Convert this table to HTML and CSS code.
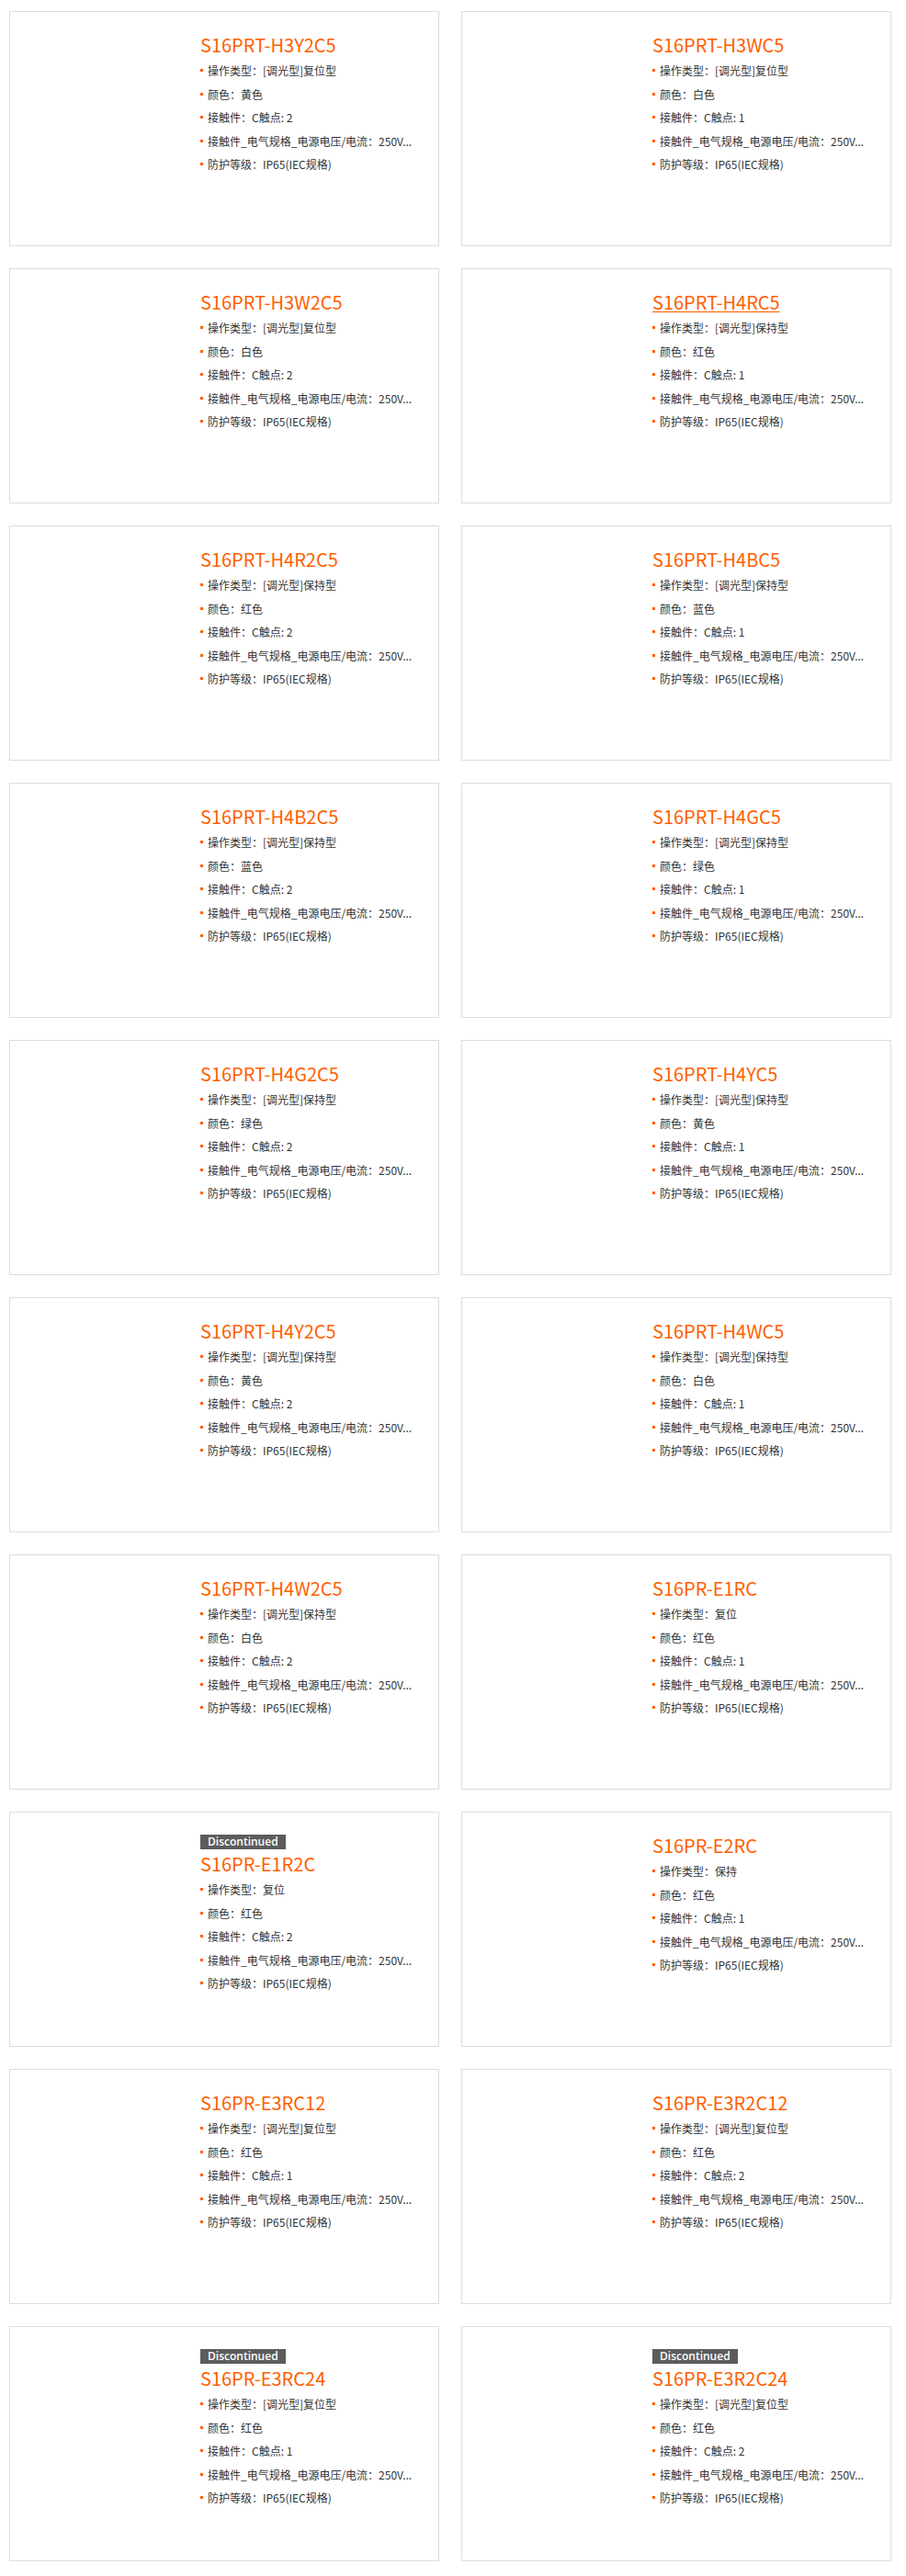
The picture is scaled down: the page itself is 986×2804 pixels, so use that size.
FILE: index.html
```html
<!DOCTYPE html>
<html lang="zh-CN">
<head>
<meta charset="utf-8">
<title>S16PR 产品列表</title>
<link rel="stylesheet" href="styles.css">
</head>
<body>
<div class="grid">

  <div class="card"><div class="thumb"></div><div class="info">
    <a class="title" href="#">S16PRT-H3Y2C5</a>
    <ul class="specs"><li>操作类型：[调光型]复位型</li><li>颜色：黄色</li><li>接触件：C触点: 2</li><li>接触件_电气规格_电源电压/电流：250V...</li><li>防护等级：IP65(IEC规格)</li></ul>
  </div></div>

  <div class="card"><div class="thumb"></div><div class="info">
    <a class="title" href="#">S16PRT-H3WC5</a>
    <ul class="specs"><li>操作类型：[调光型]复位型</li><li>颜色：白色</li><li>接触件：C触点: 1</li><li>接触件_电气规格_电源电压/电流：250V...</li><li>防护等级：IP65(IEC规格)</li></ul>
  </div></div>

  <div class="card"><div class="thumb"></div><div class="info">
    <a class="title" href="#">S16PRT-H3W2C5</a>
    <ul class="specs"><li>操作类型：[调光型]复位型</li><li>颜色：白色</li><li>接触件：C触点: 2</li><li>接触件_电气规格_电源电压/电流：250V...</li><li>防护等级：IP65(IEC规格)</li></ul>
  </div></div>

  <div class="card"><div class="thumb"></div><div class="info">
    <a class="title hover" href="#">S16PRT-H4RC5</a>
    <ul class="specs"><li>操作类型：[调光型]保持型</li><li>颜色：红色</li><li>接触件：C触点: 1</li><li>接触件_电气规格_电源电压/电流：250V...</li><li>防护等级：IP65(IEC规格)</li></ul>
  </div></div>

  <div class="card"><div class="thumb"></div><div class="info">
    <a class="title" href="#">S16PRT-H4R2C5</a>
    <ul class="specs"><li>操作类型：[调光型]保持型</li><li>颜色：红色</li><li>接触件：C触点: 2</li><li>接触件_电气规格_电源电压/电流：250V...</li><li>防护等级：IP65(IEC规格)</li></ul>
  </div></div>

  <div class="card"><div class="thumb"></div><div class="info">
    <a class="title" href="#">S16PRT-H4BC5</a>
    <ul class="specs"><li>操作类型：[调光型]保持型</li><li>颜色：蓝色</li><li>接触件：C触点: 1</li><li>接触件_电气规格_电源电压/电流：250V...</li><li>防护等级：IP65(IEC规格)</li></ul>
  </div></div>

  <div class="card"><div class="thumb"></div><div class="info">
    <a class="title" href="#">S16PRT-H4B2C5</a>
    <ul class="specs"><li>操作类型：[调光型]保持型</li><li>颜色：蓝色</li><li>接触件：C触点: 2</li><li>接触件_电气规格_电源电压/电流：250V...</li><li>防护等级：IP65(IEC规格)</li></ul>
  </div></div>

  <div class="card"><div class="thumb"></div><div class="info">
    <a class="title" href="#">S16PRT-H4GC5</a>
    <ul class="specs"><li>操作类型：[调光型]保持型</li><li>颜色：绿色</li><li>接触件：C触点: 1</li><li>接触件_电气规格_电源电压/电流：250V...</li><li>防护等级：IP65(IEC规格)</li></ul>
  </div></div>

  <div class="card"><div class="thumb"></div><div class="info">
    <a class="title" href="#">S16PRT-H4G2C5</a>
    <ul class="specs"><li>操作类型：[调光型]保持型</li><li>颜色：绿色</li><li>接触件：C触点: 2</li><li>接触件_电气规格_电源电压/电流：250V...</li><li>防护等级：IP65(IEC规格)</li></ul>
  </div></div>

  <div class="card"><div class="thumb"></div><div class="info">
    <a class="title" href="#">S16PRT-H4YC5</a>
    <ul class="specs"><li>操作类型：[调光型]保持型</li><li>颜色：黄色</li><li>接触件：C触点: 1</li><li>接触件_电气规格_电源电压/电流：250V...</li><li>防护等级：IP65(IEC规格)</li></ul>
  </div></div>

  <div class="card"><div class="thumb"></div><div class="info">
    <a class="title" href="#">S16PRT-H4Y2C5</a>
    <ul class="specs"><li>操作类型：[调光型]保持型</li><li>颜色：黄色</li><li>接触件：C触点: 2</li><li>接触件_电气规格_电源电压/电流：250V...</li><li>防护等级：IP65(IEC规格)</li></ul>
  </div></div>

  <div class="card"><div class="thumb"></div><div class="info">
    <a class="title" href="#">S16PRT-H4WC5</a>
    <ul class="specs"><li>操作类型：[调光型]保持型</li><li>颜色：白色</li><li>接触件：C触点: 1</li><li>接触件_电气规格_电源电压/电流：250V...</li><li>防护等级：IP65(IEC规格)</li></ul>
  </div></div>

  <div class="card"><div class="thumb"></div><div class="info">
    <a class="title" href="#">S16PRT-H4W2C5</a>
    <ul class="specs"><li>操作类型：[调光型]保持型</li><li>颜色：白色</li><li>接触件：C触点: 2</li><li>接触件_电气规格_电源电压/电流：250V...</li><li>防护等级：IP65(IEC规格)</li></ul>
  </div></div>

  <div class="card"><div class="thumb"></div><div class="info">
    <a class="title" href="#">S16PR-E1RC</a>
    <ul class="specs"><li>操作类型：复位</li><li>颜色：红色</li><li>接触件：C触点: 1</li><li>接触件_电气规格_电源电压/电流：250V...</li><li>防护等级：IP65(IEC规格)</li></ul>
  </div></div>

  <div class="card"><div class="thumb"></div><div class="info">
    <span class="badge">Discontinued</span>
    <a class="title" href="#">S16PR-E1R2C</a>
    <ul class="specs"><li>操作类型：复位</li><li>颜色：红色</li><li>接触件：C触点: 2</li><li>接触件_电气规格_电源电压/电流：250V...</li><li>防护等级：IP65(IEC规格)</li></ul>
  </div></div>

  <div class="card"><div class="thumb"></div><div class="info">
    <a class="title" href="#">S16PR-E2RC</a>
    <ul class="specs"><li>操作类型：保持</li><li>颜色：红色</li><li>接触件：C触点: 1</li><li>接触件_电气规格_电源电压/电流：250V...</li><li>防护等级：IP65(IEC规格)</li></ul>
  </div></div>

  <div class="card"><div class="thumb"></div><div class="info">
    <a class="title" href="#">S16PR-E3RC12</a>
    <ul class="specs"><li>操作类型：[调光型]复位型</li><li>颜色：红色</li><li>接触件：C触点: 1</li><li>接触件_电气规格_电源电压/电流：250V...</li><li>防护等级：IP65(IEC规格)</li></ul>
  </div></div>

  <div class="card"><div class="thumb"></div><div class="info">
    <a class="title" href="#">S16PR-E3R2C12</a>
    <ul class="specs"><li>操作类型：[调光型]复位型</li><li>颜色：红色</li><li>接触件：C触点: 2</li><li>接触件_电气规格_电源电压/电流：250V...</li><li>防护等级：IP65(IEC规格)</li></ul>
  </div></div>

  <div class="card"><div class="thumb"></div><div class="info">
    <span class="badge">Discontinued</span>
    <a class="title" href="#">S16PR-E3RC24</a>
    <ul class="specs"><li>操作类型：[调光型]复位型</li><li>颜色：红色</li><li>接触件：C触点: 1</li><li>接触件_电气规格_电源电压/电流：250V...</li><li>防护等级：IP65(IEC规格)</li></ul>
  </div></div>

  <div class="card"><div class="thumb"></div><div class="info">
    <span class="badge">Discontinued</span>
    <a class="title" href="#">S16PR-E3R2C24</a>
    <ul class="specs"><li>操作类型：[调光型]复位型</li><li>颜色：红色</li><li>接触件：C触点: 2</li><li>接触件_电气规格_电源电压/电流：250V...</li><li>防护等级：IP65(IEC规格)</li></ul>
  </div></div>

</div>
</body>
</html>
```

FILE: styles.css
```css
html, body {
  margin: 0;
  padding: 0;
  background: #fff;
}

body {
  font-family: "Noto Sans CJK SC", "Noto Sans", sans-serif;
  color: #333;
}

.grid {
  display: grid;
  grid-template-columns: 468px 468px;
  grid-auto-rows: 256px;
  column-gap: 24px;
  row-gap: 24px;
  padding: 12px 0 0 10px;
}

.card {
  box-sizing: border-box;
  border: 1px solid #dddddd;
  display: grid;
  grid-template-columns: 207px 1fr;
  padding-top: 24px;
}

.info {
  display: flex;
  flex-direction: column;
  align-items: flex-start;
  min-width: 0;
}

.badge {
  display: inline-block;
  background: #5c5c5c;
  color: #fff;
  font-family: "Open Sans", "Noto Sans", sans-serif;
  font-weight: 600;
  font-size: 12px;
  line-height: 16px;
  height: 16px;
  padding: 0 8px;
  margin-bottom: 4px;
}

.title {
  color: #ff5f00;
  font-size: 20px;
  line-height: 24px;
  text-decoration: none;
  margin-bottom: 3px;
}

.title.hover {
  text-decoration: underline;
  text-underline-offset: 2px;
  text-decoration-thickness: 1px;
}

.specs {
  list-style: none;
  margin: 0;
  padding: 0;
  font-family: "Noto Sans CJK TC", "Noto Sans CJK SC", sans-serif;
}

.specs li {
  font-size: 12px;
  line-height: 25.5px;
  white-space: nowrap;
  display: flex;
  align-items: center;
}

.specs li::before {
  content: "";
  width: 3px;
  height: 3px;
  background: #ff5f00;
  margin-right: 5px;
  flex: none;
}
```
